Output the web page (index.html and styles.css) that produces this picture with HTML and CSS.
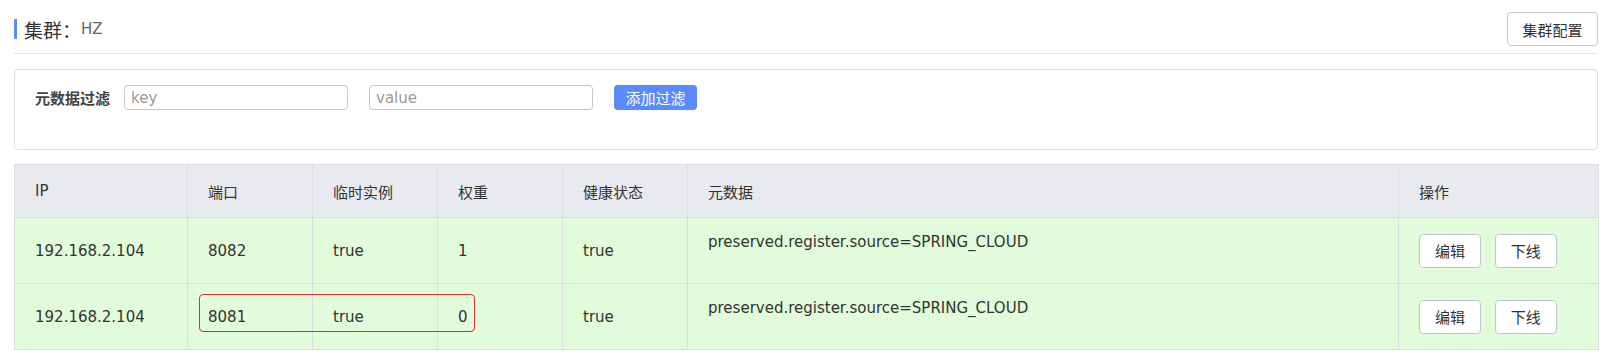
FILE: index.html
```html
<!DOCTYPE html>
<html lang="zh-CN">
<head>
    <meta charset="UTF-8">
    <title>集群详情</title>
    <link rel="stylesheet" href="styles.css">
</head>
<body>
    <div class="page">
        <div class="page-header">
            <div class="page-title">
                <span class="title-bar"></span>
                <span class="title-main">集群：</span>
                <span class="title-sub">HZ</span>
            </div>
            <button class="btn">集群配置</button>
        </div>

        <div class="filter-box">
            <div class="filter-row">
                <label class="filter-label">元数据过滤</label>
                <input type="text" class="filter-input" placeholder="key">
                <input type="text" class="filter-input" placeholder="value">
                <button class="btn-primary">添加过滤</button>
            </div>
        </div>

        <div class="table-wrap">
            <table class="instance-table">
                <colgroup>
                    <col style="width: 173px">
                    <col style="width: 125px">
                    <col style="width: 125px">
                    <col style="width: 125px">
                    <col style="width: 125px">
                    <col style="width: 711px">
                    <col style="width: 200px">
                </colgroup>
                <thead>
                    <tr>
                        <th>IP</th>
                        <th>端口</th>
                        <th>临时实例</th>
                        <th>权重</th>
                        <th>健康状态</th>
                        <th>元数据</th>
                        <th>操作</th>
                    </tr>
                </thead>
                <tbody>
                    <tr>
                        <td>192.168.2.104</td>
                        <td>8082</td>
                        <td>true</td>
                        <td>1</td>
                        <td>true</td>
                        <td class="meta">preserved.register.source=SPRING_CLOUD</td>
                        <td>
                            <button class="btn btn-small">编辑</button>
                            <button class="btn btn-small">下线</button>
                        </td>
                    </tr>
                    <tr>
                        <td>192.168.2.104</td>
                        <td>8081</td>
                        <td>true</td>
                        <td>0</td>
                        <td>true</td>
                        <td class="meta">preserved.register.source=SPRING_CLOUD</td>
                        <td>
                            <button class="btn btn-small">编辑</button>
                            <button class="btn btn-small">下线</button>
                        </td>
                    </tr>
                </tbody>
            </table>
            <div class="highlight"></div>
        </div>
    </div>
</body>
</html>
```

FILE: styles.css
```css
body {
    font-family: "DejaVu Sans", "Noto Sans CJK SC", sans-serif;
    font-size: 15px;
    color: #333;
    margin: 0;
    background-color: #fff;
}
.page {
    margin-left: 14px;
    width: 1584px;
}
.page-header {
    display: flex;
    align-items: center;
    justify-content: space-between;
    padding: 12px 0 7px;
    border-bottom: 1px solid #e4e4e8;
}
.page-title {
    display: flex;
    align-items: center;
}
.title-bar {
    display: inline-block;
    width: 3px;
    height: 20px;
    background-color: #5a8cff;
    margin-right: 7px;
}
.title-main {
    font-size: 19px;
    color: #333;
}
.title-sub {
    font-size: 15px;
    color: #666;
}
.btn {
    font-family: inherit;
    font-size: 15px;
    color: #333;
    background-color: #fff;
    border: 1px solid #c4c6cf;
    border-radius: 4px;
    width: 91px;
    height: 34px;
    padding: 0;
    cursor: pointer;
}
.filter-box {
    margin-top: 15px;
    border: 1px solid #dcdde3;
    border-radius: 4px;
    padding: 15px 20px 39px;
}
.filter-row {
    display: flex;
    align-items: center;
    height: 25px;
}
.filter-label {
    font-weight: bold;
    font-size: 15px;
    color: #444;
    margin-right: 14px;
}
.filter-input {
    width: 224px;
    height: 25px;
    box-sizing: border-box;
    border: 1px solid #c4c6cf;
    border-radius: 4px;
    padding: 0 6px;
    font-family: inherit;
    font-size: 15px;
    margin-right: 21px;
}
.filter-input::placeholder {
    color: #999;
}
.btn-primary {
    width: 83px;
    height: 25px;
    padding: 0;
    border: none;
    border-radius: 4px;
    background-color: #5a8aff;
    color: #fff;
    font-family: inherit;
    font-size: 15px;
}
.table-wrap {
    position: relative;
    margin-top: 14px;
}
.instance-table {
    width: 100%;
    border-collapse: collapse;
    table-layout: fixed;
}
.instance-table th,
.instance-table td {
    border: 1px solid #dcdde3;
    text-align: left;
    padding: 0 20px;
    font-weight: normal;
}
.instance-table thead tr {
    height: 53px;
}
.instance-table th {
    background-color: #e9eaef;
}
.instance-table tbody tr {
    height: 66px;
}
.instance-table td {
    background-color: #e2fbda;
}
.instance-table td.meta {
    vertical-align: top;
    padding-top: 15px;
}
.btn-small {
    width: 62px;
    margin-right: 9px;
}
.highlight {
    position: absolute;
    left: 185px;
    top: 130px;
    width: 276px;
    height: 38px;
    box-sizing: border-box;
    border: 1.5px solid #f02a2a;
    border-radius: 4px;
}
```
